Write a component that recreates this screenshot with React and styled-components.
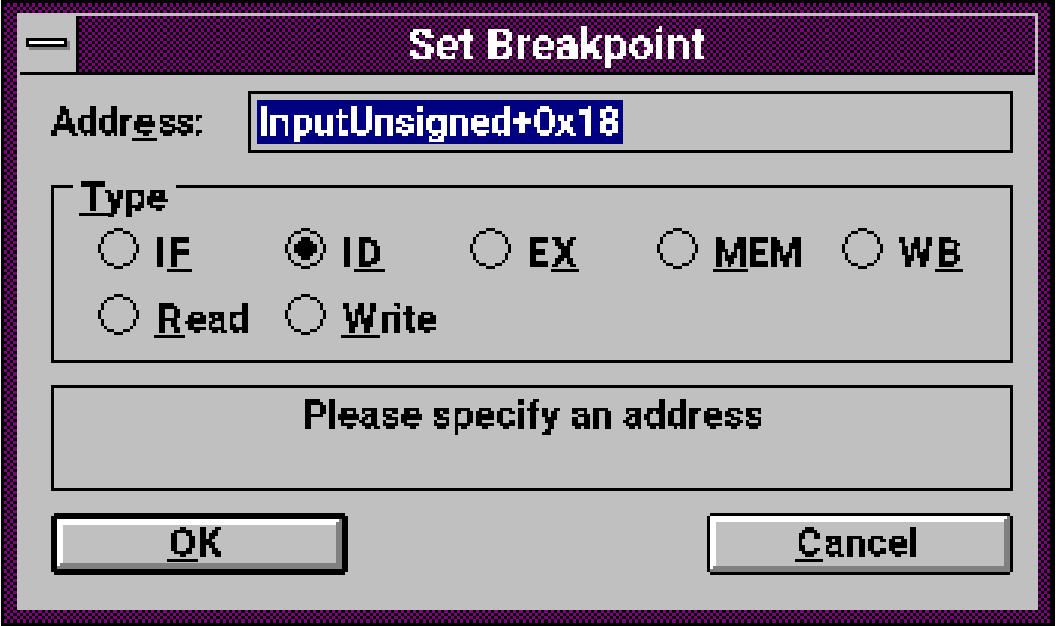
import React, { useState } from 'react'
import styled, { createGlobalStyle } from 'styled-components'

const GlobalStyle = createGlobalStyle`
    body{
        margin: 0;
        background-color: #fff;
        overflow: hidden;
    }
    *{
        box-sizing: border-box;
    }
`

// size of one desktop pixel, the dialog is drawn enlarged
const CELL_X = 3.123
const CELL_Y = 3.127

const Frame = styled.div`
    position: relative;
    width: 1056px;
    height: 626px;
    padding: 13px 18px 16px 17px;
    font: 700 39.4px/43px Roboto, "Liberation Sans", sans-serif;
    color: #000;
`

const Texture = styled.svg`
    position: absolute;
    top: 0;
    left: 0;
`

const FilterDefs = styled.svg`
    position: absolute;
    width: 0;
    height: 0;
`

const Dialog = styled.div`
    position: relative;
    display: flex;
    flex-direction: column;
    height: 100%;
    border: 3px solid #c0c0c0;
    border-bottom: 0;
`

const TitleBar = styled.header`
    display: flex;
    height: 59px;
    border-bottom: 3px solid #000;
`

const SystemMenu = styled.div`
    width: 59px;
    padding: 22px 0 0 6px;
    background-color: #c0c0c0;
    border-right: 3px solid #000;
    span{
        display: block;
        width: 41px;
        height: 9px;
        border: 3px solid #000;
        background-color: #fff;
        box-shadow: 3px 3px #808080;
    }
`

const Pixels = styled.span`
    display: inline-block;
    white-space: pre;
    letter-spacing: ${p => p.$spacing || 0}px;
    filter: url(#pixels);
`

const Title = styled.div`
    flex: 1;
    padding-top: 1px;
    text-align: center;
    font-size: 44px;
    line-height: 56px;
    color: #fff;
`

const Body = styled.main`
    flex: 1;
    padding: 16px 22px 0 31px;
    background-color: #c0c0c0;
`

const Caption = styled.span`
    display: flex;
    height: 43px;
`

const Mnemonic = styled.span`
    position: relative;
    width: ${p => p.$width}px;
    margin-right: ${p => p.$kern || 0}px;
    padding-right: ${p => p.$inset ?? 1}px;
    text-align: center;
    &::after{
        content: "";
        position: absolute;
        left: 0;
        top: 38px;
        width: 100%;
        height: 3px;
        background-color: #000;
    }
`

const AddressRow = styled.div`
    display: flex;
    height: 62px;
    > ${Caption}{
        width: 197px;
        padding-top: 9px;
    }
`

const AddressField = styled.div`
    flex: 1;
    padding: 6px;
    border: 3px solid #000;
`

const Selection = styled.div`
    width: 366px;
    height: 44px;
    padding-left: 1px;
    background-color: #000080;
    color: #fff;
`

const TypeGroup = styled.section`
    height: 178px;
    margin-top: 32px;
    border: 3px solid #000;
`

const Legend = styled.div`
    width: 103px;
    margin: -13px 0 10px 19px;
    padding-left: 6px;
    background-color: #c0c0c0;
`

const Radios = styled.div`
    display: grid;
    grid-template-columns: 187px 185px 187px 185px 150px;
    grid-auto-rows: 66px;
    padding-left: 44px;
`

const Radio = styled.label`
    display: flex;
    align-items: flex-start;
    gap: 15px;
    svg{
        width: 41px;
        height: 41px;
        flex: none;
    }
    ${Caption}{
        padding-top: 3px;
    }
`

const MessageBox = styled.section`
    height: 106px;
    margin-top: 22px;
    padding: 5px 0 0 2px;
    border: 3px solid #000;
    text-align: center;
`

const Actions = styled.footer`
    display: flex;
    justify-content: space-between;
    margin-top: 22px;
`

const Button = styled.button`
    width: ${p => p.$default ? 297 : 306}px;
    height: 62px;
    padding: 0;
    border: ${p => p.$default ? 6 : 3}px solid #000;
    background-color: #c0c0c0;
    box-shadow: inset -3px -3px #808080, inset 3px 3px #fff, inset -6px -6px #808080, inset 6px 6px #fff;
    clip-path: polygon(3px 0, calc(100% - 3px) 0, calc(100% - 3px) 3px, 100% 3px, 100% calc(100% - 3px), calc(100% - 3px) calc(100% - 3px), calc(100% - 3px) 100%, 3px 100%, 3px calc(100% - 3px), 0 calc(100% - 3px), 0 3px, 3px 3px);
    font: inherit;
    color: #000;
    ${Caption}{
        justify-content: center;
        padding-right: ${p => p.$default ? 10 : 6}px;
        margin-top: -3px;
    }
`

const RING = [
    '.....###.....',
    '...##...##...',
    '..#.......#..',
    '.#.........#.',
    '.#.........#.',
    '#...........#',
    '#...........#',
    '#...........#',
    '.#.........#.',
    '.#.........#.',
    '..#.......#..',
    '...##...##...',
    '.....###.....',
]

const DOT = 'M5 3h3v1h1v1h1v3h-1v1h-1v1h-3v-1h-1v-1h-1v-3h1v-1h1z'

const ringPath = RING.map((row, y) => [...row].map((c, x) => c === '#' ? `M${x} ${y}h1v1h-1z` : '').join('')).join('')

const weave = () => {
    let d = ''
    const x = i => Math.round(1 + i * CELL_X)
    const y = j => Math.round(0.3 + j * CELL_Y)
    for (let j = 1; j < 199; j++) {
        for (let i = 1; i < 336; i++) {
            if ((i + j) % 2) d += `M${x(i)} ${y(j)}H${x(i + 1)}V${y(j + 1)}H${x(i)}z`
        }
    }
    return d
}
const weavePath = weave()

const types = [
    { id: 'IF', before: 'I', lead: 13, char: 'F', width: 25 },
    { id: 'ID', before: 'I', lead: 13, char: 'D', width: 31 },
    { id: 'EX', before: 'E', lead: 25, char: 'X', width: 28 },
    { id: 'MEM', char: 'M', width: 35, kern: -1, after: 'EM', spacing: -1 },
    { id: 'WB', before: 'W', lead: 37, char: 'B', width: 28 },
    { id: 'Read', char: 'R', width: 31, after: 'ead' },
    { id: 'Write', char: 'W', width: 39, kern: -1, after: 'rite', spacing: -0.6 },
]

const Lead = styled.span`
    width: ${p => p.$width}px;
    padding-right: 1px;
    text-align: center;
`

const RadioButton = ({ type, checked, onSelect }) => {
    return <Radio onClick={onSelect}>
        <svg viewBox="0 0 13 13" shapeRendering="crispEdges">
            <path d={ringPath} />
            {checked && <path d={DOT} />}
        </svg>
        <Caption>
            {type.before && <Lead $width={type.lead}><Pixels>{type.before}</Pixels></Lead>}
            <Mnemonic $width={type.width} $kern={type.kern}><Pixels>{type.char}</Pixels></Mnemonic>
            {type.after && <Pixels $spacing={type.spacing}>{type.after}</Pixels>}
        </Caption>
    </Radio>
}

const App = () => {

    const [selected, setSelected] = useState('ID')

    return <Frame>
        <GlobalStyle />
        <FilterDefs>
            {/* samples the text once per 3px cell and grows every sample to fill its cell */}
            <filter id="pixels" x="-3" y="0" width="600" height="60" filterUnits="userSpaceOnUse" primitiveUnits="userSpaceOnUse" colorInterpolationFilters="sRGB">
                <feGaussianBlur in="SourceGraphic" stdDeviation="0.7" result="soft" />
                <feFlood x="1" y="1" width="1" height="1" floodColor="#000" result="point" />
                <feOffset in="point" x="0" y="0" width="3" height="3" dx="0" dy="0" />
                <feTile x="-3" y="0" width="600" height="60" result="grid" />
                <feComposite in="soft" in2="grid" operator="in" />
                <feComponentTransfer>
                    <feFuncA type="discrete" tableValues="0 1" />
                </feComponentTransfer>
                <feMorphology operator="dilate" radius="1" />
            </filter>
        </FilterDefs>
        <Texture width="1056" height="626" shapeRendering="crispEdges">
            <rect x="1" width="1054" height="626" />
            <path d={weavePath} fill="#800080" />
        </Texture>

        <Dialog>
            <TitleBar>
                <SystemMenu><span /></SystemMenu>
                <Title><Pixels $spacing={0.5}>Set Breakpoint</Pixels></Title>
            </TitleBar>

            <Body>
                <AddressRow>
                    <Caption>
                        <Pixels $spacing={-1}>Addr</Pixels>
                        <Mnemonic $width={25}><Pixels>e</Pixels></Mnemonic>
                        <Pixels $spacing={-2.4}>ss:</Pixels>
                    </Caption>
                    <AddressField>
                        <Selection><Pixels $spacing={-0.3}>InputUnsigned+0x18</Pixels></Selection>
                    </AddressField>
                </AddressRow>

                <TypeGroup>
                    <Legend>
                        <Caption>
                            <Mnemonic $width={34} $kern={-8} $inset={6}><Pixels>T</Pixels></Mnemonic>
                            <Pixels $spacing={-0.4}>ype</Pixels>
                        </Caption>
                    </Legend>
                    <Radios>
                        {types.map(t => <RadioButton key={t.id} type={t} checked={t.id === selected} onSelect={() => setSelected(t.id)} />)}
                    </Radios>
                </TypeGroup>

                <MessageBox><Pixels>Please specify an address</Pixels></MessageBox>

                <Actions>
                    <Button $default>
                        <Caption><Mnemonic $width={31} $kern={-1}><Pixels>O</Pixels></Mnemonic><Pixels>K</Pixels></Caption>
                    </Button>
                    <Button>
                        <Caption><Mnemonic $width={28}><Pixels>C</Pixels></Mnemonic><Pixels>ancel</Pixels></Caption>
                    </Button>
                </Actions>
            </Body>
        </Dialog>
    </Frame>
}

export default App
